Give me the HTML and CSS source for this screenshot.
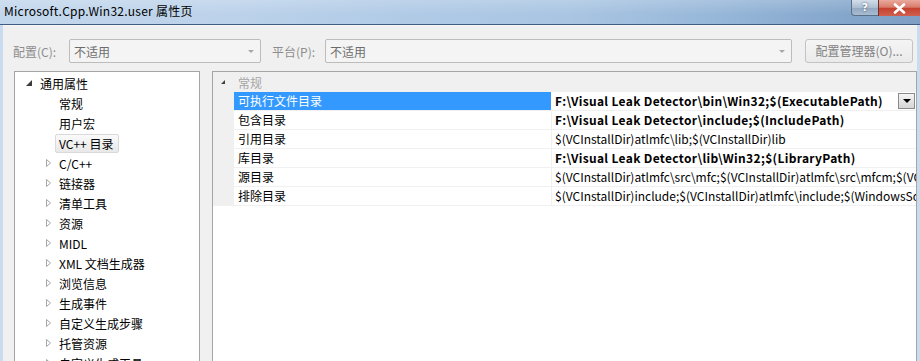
FILE: index.html
```html
<!DOCTYPE html>
<html lang="zh">
<head>
<meta charset="utf-8">
<title>Microsoft.Cpp.Win32.user 属性页</title>
<link rel="stylesheet" href="styles.css">
</head>
<body>
<div class="window">
  <div class="titlebar">
    <span class="title">Microsoft.Cpp.Win32.user 属性页</span>
    <div class="caption-btns">
      <span class="cap-help">?</span>
      <span class="cap-close"><svg width="13" height="11" viewBox="0 0 13 11"><path d="M2 1.5 L11 9.5 M11 1.5 L2 9.5" stroke="#ffffff" stroke-width="2.6" stroke-linecap="round"/></svg></span>
    </div>
  </div>
  <div class="client">
    <div class="toolbar">
      <span class="lbl lbl-conf">配置(C):</span>
      <div class="combo combo-conf"><span class="combo-text">不适用</span><span class="combo-arrow"></span></div>
      <span class="lbl lbl-plat">平台(P):</span>
      <div class="combo combo-plat"><span class="combo-text">不适用</span><span class="combo-arrow"></span></div>
      <div class="mgr-btn">配置管理器(O)...</div>
    </div>
    <div class="main">
      <div class="tree">
        <div class="node l0"><span class="exp"><svg width="16" height="16" viewBox="0 0 16 16"><path d="M11 5 L11 11 L5 11 Z" fill="#3c3c3c"/></svg></span><span class="node-text">通用属性</span></div>
        <div class="node l1"><span class="exp"></span><span class="node-text">常规</span></div>
        <div class="node l1"><span class="exp"></span><span class="node-text">用户宏</span></div>
        <div class="node l1"><span class="exp"></span><span class="node-text sel">VC++ 目录</span></div>
        <div class="node l1"><span class="exp"><svg width="16" height="16" viewBox="0 0 16 16"><path d="M6.5 4.5 L10.5 8 L6.5 11.5 Z" fill="#ffffff" stroke="#a6a6a6" stroke-linejoin="round"/></svg></span><span class="node-text">C/C++</span></div>
        <div class="node l1"><span class="exp"><svg width="16" height="16" viewBox="0 0 16 16"><path d="M6.5 4.5 L10.5 8 L6.5 11.5 Z" fill="#ffffff" stroke="#a6a6a6" stroke-linejoin="round"/></svg></span><span class="node-text">链接器</span></div>
        <div class="node l1"><span class="exp"><svg width="16" height="16" viewBox="0 0 16 16"><path d="M6.5 4.5 L10.5 8 L6.5 11.5 Z" fill="#ffffff" stroke="#a6a6a6" stroke-linejoin="round"/></svg></span><span class="node-text">清单工具</span></div>
        <div class="node l1"><span class="exp"><svg width="16" height="16" viewBox="0 0 16 16"><path d="M6.5 4.5 L10.5 8 L6.5 11.5 Z" fill="#ffffff" stroke="#a6a6a6" stroke-linejoin="round"/></svg></span><span class="node-text">资源</span></div>
        <div class="node l1"><span class="exp"><svg width="16" height="16" viewBox="0 0 16 16"><path d="M6.5 4.5 L10.5 8 L6.5 11.5 Z" fill="#ffffff" stroke="#a6a6a6" stroke-linejoin="round"/></svg></span><span class="node-text">MIDL</span></div>
        <div class="node l1"><span class="exp"><svg width="16" height="16" viewBox="0 0 16 16"><path d="M6.5 4.5 L10.5 8 L6.5 11.5 Z" fill="#ffffff" stroke="#a6a6a6" stroke-linejoin="round"/></svg></span><span class="node-text">XML 文档生成器</span></div>
        <div class="node l1"><span class="exp"><svg width="16" height="16" viewBox="0 0 16 16"><path d="M6.5 4.5 L10.5 8 L6.5 11.5 Z" fill="#ffffff" stroke="#a6a6a6" stroke-linejoin="round"/></svg></span><span class="node-text">浏览信息</span></div>
        <div class="node l1"><span class="exp"><svg width="16" height="16" viewBox="0 0 16 16"><path d="M6.5 4.5 L10.5 8 L6.5 11.5 Z" fill="#ffffff" stroke="#a6a6a6" stroke-linejoin="round"/></svg></span><span class="node-text">生成事件</span></div>
        <div class="node l1"><span class="exp"><svg width="16" height="16" viewBox="0 0 16 16"><path d="M6.5 4.5 L10.5 8 L6.5 11.5 Z" fill="#ffffff" stroke="#a6a6a6" stroke-linejoin="round"/></svg></span><span class="node-text">自定义生成步骤</span></div>
        <div class="node l1"><span class="exp"><svg width="16" height="16" viewBox="0 0 16 16"><path d="M6.5 4.5 L10.5 8 L6.5 11.5 Z" fill="#ffffff" stroke="#a6a6a6" stroke-linejoin="round"/></svg></span><span class="node-text">托管资源</span></div>
        <div class="node l1"><span class="exp"><svg width="16" height="16" viewBox="0 0 16 16"><path d="M6.5 4.5 L10.5 8 L6.5 11.5 Z" fill="#ffffff" stroke="#a6a6a6" stroke-linejoin="round"/></svg></span><span class="node-text">自定义生成工具</span></div>
      </div>
      <div class="grid">
        <div class="cat-row"><span class="cat-exp"><svg width="21" height="20" viewBox="0 0 21 20"><path d="M12 8 L12 12 L8 12 Z" fill="#404040"/></svg></span><span class="cat-text">常规</span></div>
        <div class="prop-row">
          <span class="margin"></span>
          <span class="pname selected">可执行文件目录</span>
          <span class="pvalue bold"><span class="vtext">F:\Visual Leak Detector\bin\Win32;$(ExecutablePath)</span><span class="drop-btn"></span></span>
        </div>
        <div class="prop-row">
          <span class="margin"></span>
          <span class="pname">包含目录</span>
          <span class="pvalue bold"><span class="vtext">F:\Visual Leak Detector\include;$(IncludePath)</span></span>
        </div>
        <div class="prop-row">
          <span class="margin"></span>
          <span class="pname">引用目录</span>
          <span class="pvalue"><span class="vtext">$(VCInstallDir)atlmfc\lib;$(VCInstallDir)lib</span></span>
        </div>
        <div class="prop-row">
          <span class="margin"></span>
          <span class="pname">库目录</span>
          <span class="pvalue bold"><span class="vtext">F:\Visual Leak Detector\lib\Win32;$(LibraryPath)</span></span>
        </div>
        <div class="prop-row">
          <span class="margin"></span>
          <span class="pname">源目录</span>
          <span class="pvalue"><span class="vtext">$(VCInstallDir)atlmfc\src\mfc;$(VCInstallDir)atlmfc\src\mfcm;$(VCInstallDir)atlmfc\src\atl;$(VCInstallDir)crt\src;</span></span>
        </div>
        <div class="prop-row">
          <span class="margin"></span>
          <span class="pname">排除目录</span>
          <span class="pvalue"><span class="vtext">$(VCInstallDir)include;$(VCInstallDir)atlmfc\include;$(WindowsSdkDir)include;$(FrameworkSDKDir)\include;</span></span>
        </div>
      </div>
    </div>
  </div>
</div>
</body>
</html>
```

FILE: styles.css
```css
* { box-sizing: border-box; }
html, body {
  margin: 0;
  padding: 0;
}
body {
  width: 920px;
  height: 361px;
  overflow: hidden;
  font-family: "Noto Sans CJK SC", sans-serif;
  font-size: 12px;
  color: #000;
  background: #c9dbee;
}
.window {
  display: flex;
  flex-direction: column;
  width: 920px;
  height: 361px;
}
.titlebar {
  height: 25px;
  flex: none;
  display: flex;
  align-items: flex-start;
  border-bottom: 1px solid #3e5d80;
  background:
    linear-gradient(180deg, rgba(255,255,255,0.18) 0%, rgba(255,255,255,0) 60%),
    linear-gradient(90deg, #c3d7ec 0%, #bcd2ea 25%, #b0cae6 45%, #a9c5e2 62%, #97b7d9 78%, #84a6cb 92%, #7e9fc3 100%);
}
.title {
  padding: 3px 0 0 4px;
  line-height: 16px;
  color: #000;
  white-space: nowrap;
  letter-spacing: 0.25px;
}
.caption-btns {
  margin-left: auto;
  display: flex;
  height: 16px;
}
.cap-help {
  width: 27px;
  height: 16px;
  border: 1px solid #5a6f88;
  border-top: none;
  border-right: none;
  border-radius: 0 0 0 4px;
  background: linear-gradient(180deg, #d2dde9 0%, #aebfd2 50%, #93a8c0 52%, #a8bcd2 100%);
  color: #fff;
  font-family: "DejaVu Sans", sans-serif;
  font-weight: bold;
  font-size: 11px;
  line-height: 15px;
  text-align: center;
  text-shadow: 0 0 2px #33445a;
}
.cap-close {
  width: 42px;
  height: 16px;
  border-left: 1px solid #6d2f2f;
  background: linear-gradient(180deg, #e9a99d 0%, #d97c6c 45%, #c4412e 52%, #d0614f 100%);
  display: flex;
  align-items: center;
  justify-content: center;
}
.client {
  flex: 1;
  margin: 0 3px;
  background: #f0f0f0;
  border-top: 1px solid #f7f7f7;
  display: flex;
  flex-direction: column;
  overflow: hidden;
}
.toolbar {
  display: flex;
  align-items: center;
  height: 24px;
  margin-top: 13px;
  padding-left: 10px;
  flex: none;
}
.lbl {
  color: #8d8d8d;
  white-space: nowrap;
}
.lbl-conf { width: 56px; }
.lbl-plat { width: 53px; margin-left: 11px; }
.combo {
  height: 24px;
  border: 1px solid #bcbcbc;
  border-radius: 2px;
  background: #f4f4f4;
  display: flex;
  align-items: center;
  padding-left: 4px;
  color: #6d6d6d;
}
.combo-conf { width: 192px; }
.combo-plat { width: 467px; }
.combo-text { flex: 1; }
.combo-arrow {
  width: 0;
  height: 0;
  margin-right: 6px;
  border-left: 3px solid transparent;
  border-right: 3px solid transparent;
  border-top: 3px solid #a7a7a7;
}
.mgr-btn {
  margin-left: 13px;
  width: 108px;
  height: 24px;
  border: 1px solid #c3c3c3;
  border-radius: 3px;
  background: linear-gradient(180deg, #f4f4f4 0%, #f0f0f0 50%, #eaeaea 100%);
  color: #838383;
  text-align: center;
  line-height: 22px;
  white-space: nowrap;
}
.main {
  display: flex;
  gap: 12px;
  margin-top: 8px;
  padding-left: 11px;
  flex: 1;
  min-height: 0;
}
.tree {
  width: 186px;
  height: 320px;
  flex: none;
  background: #fff;
  border: 1px solid #a5a5a5;
  padding-top: 1px;
}
.node {
  height: 20px;
  display: flex;
  align-items: center;
  white-space: nowrap;
}
.node.l0 { padding-left: 6px; }
.node.l1 { padding-left: 25px; }
.exp {
  width: 16px;
  height: 16px;
  margin-right: 3px;
  flex: none;
  display: flex;
}
.node-text {
  line-height: 17px;
  padding: 0 4px 0 0;
}
.node-text.sel {
  margin-left: -4px;
  padding: 0 5px 0 3px;
  border: 1px solid #d9d9d9;
  border-radius: 2px;
  background: linear-gradient(180deg, #fafafa 0%, #e8e8e8 100%);
}
.grid {
  width: 705px;
  height: 320px;
  flex: none;
  background: #fff;
  border: 1px solid #a5a5a5;
  overflow: hidden;
}
.cat-row {
  height: 20px;
  background: #f0f0f0;
  display: flex;
  align-items: center;
}
.cat-exp {
  width: 21px;
  height: 20px;
  flex: none;
  display: flex;
}
.cat-text {
  padding-left: 4px;
  color: #a5a5a5;
}
.prop-row {
  display: flex;
  height: 19px;
  border-bottom: 1px solid #f0f0f0;
}
.margin {
  width: 21px;
  flex: none;
  background: #f0f0f0;
  margin-bottom: -1px;
}
.pname {
  width: 318px;
  flex: none;
  padding-left: 4px;
  line-height: 18px;
  white-space: nowrap;
  border-right: 1px solid #f0f0f0;
}
.pname.selected {
  background: #3399ff;
  color: #fff;
  border-right-color: #ffffff;
}
.pvalue {
  flex: 1;
  min-width: 0;
  display: flex;
  align-items: center;
  padding-left: 3px;
  overflow: hidden;
}
.vtext {
  flex: 1;
  min-width: 0;
  white-space: nowrap;
  overflow: hidden;
  line-height: 18px;
}
.pvalue.bold .vtext {
  font-weight: bold;
  letter-spacing: 0.33px;
}
.drop-btn {
  width: 17px;
  height: 16px;
  flex: none;
  margin-right: 1px;
  border: 1px solid #8a8a8a;
  background: linear-gradient(180deg, #f6f6f6 0%, #e4e4e4 50%, #d6d6d6 100%);
  display: flex;
  align-items: center;
  justify-content: center;
}
.drop-btn::after {
  content: "";
  width: 0;
  height: 0;
  border-left: 4px solid transparent;
  border-right: 4px solid transparent;
  border-top: 4px solid #000;
}
```
